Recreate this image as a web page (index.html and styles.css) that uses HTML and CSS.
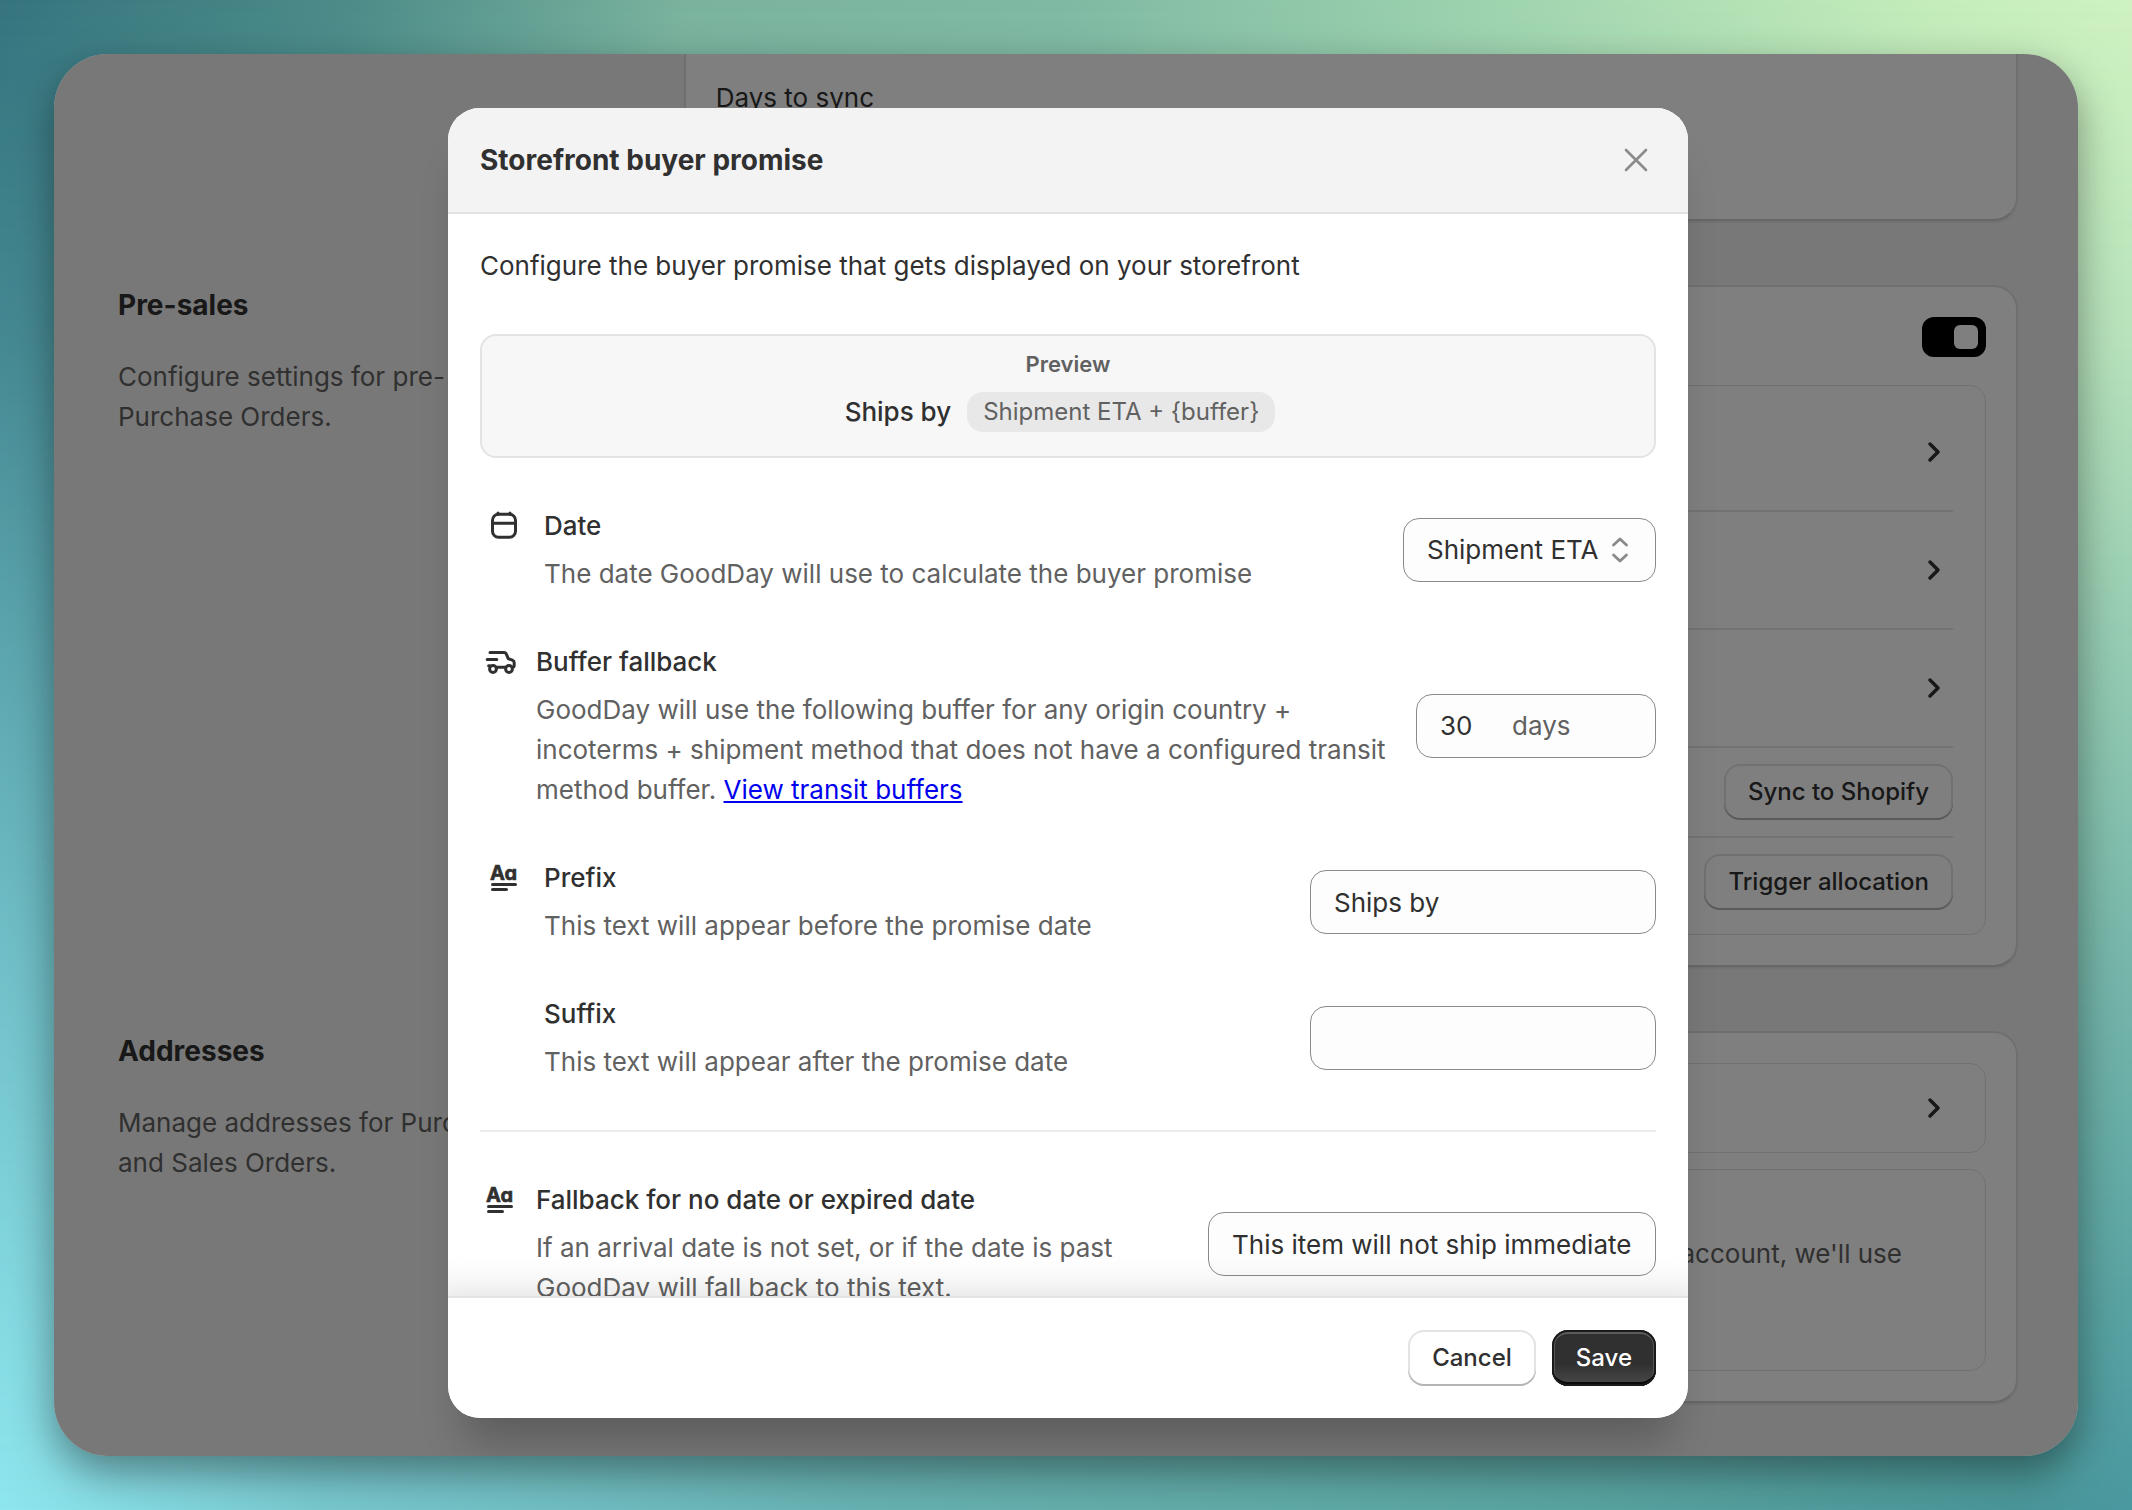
FILE: index.html
```html
<!DOCTYPE html>
<html lang="en">
  <head>
    <meta charset="UTF-8" />
    <meta name="viewport" content="width=device-width, initial-scale=1.0" />
    <title>Storefront buyer promise</title>
    <link rel="stylesheet" href="styles.css">
  </head>
  <body>
    <!-- Shared icons -->
    <svg class="sprite" aria-hidden="true">
      <symbol id="chevron" viewBox="0 0 20 20">
        <path d="M8.5 6l4 4-4 4" fill="none" stroke="currentColor" stroke-width="1.75" stroke-linecap="round" stroke-linejoin="round" />
      </symbol>
      <symbol id="text-icon" viewBox="0 0 20 20">
        <text class="icon-text" x="3" y="11">Aa</text>
        <path d="M4.25 13.25h11.5M4.25 15.75h7" fill="none" stroke="currentColor" stroke-width="1.5" stroke-linecap="round" />
      </symbol>
    </svg>

    <div class="window">
      <main class="settings">
        <section class="group">
          <div></div>
          <div class="card card-first">
            <p>Days to sync</p>
          </div>
        </section>

        <section class="group">
          <div class="group-info">
            <h2>Pre-sales</h2>
            <p>Configure settings for pre-<br />Purchase Orders.</p>
          </div>
          <div class="card">
            <div class="card-top">
              <input type="checkbox" class="switch" aria-label="Enable pre-sales" checked />
            </div>
            <div class="box box-list">
              <div class="row"><svg class="icon"><use href="#chevron" /></svg></div>
              <div class="row"><svg class="icon"><use href="#chevron" /></svg></div>
              <div class="row"><svg class="icon"><use href="#chevron" /></svg></div>
              <div class="row row-action"><button class="btn">Sync to Shopify</button></div>
              <div class="row row-action"><button class="btn">Trigger allocation</button></div>
            </div>
          </div>
        </section>

        <section class="group">
          <div class="group-info">
            <h2>Addresses</h2>
            <p>Manage addresses for Purchase Orders and Sales Orders.</p>
          </div>
          <div class="card card-stack">
            <div class="box">
              <div class="row row-action"><svg class="icon"><use href="#chevron" /></svg></div>
            </div>
            <div class="box box-note">
              <p>account, we'll use</p>
            </div>
          </div>
        </section>
      </main>

      <div class="backdrop">
        <div class="modal" role="dialog" aria-labelledby="modal-title">
          <header class="modal-header">
            <h1 id="modal-title">Storefront buyer promise</h1>
            <button class="close" aria-label="Close">
              <svg class="icon" viewBox="0 0 20 20">
                <path d="M5 5l10 10M15 5L5 15" fill="none" stroke="currentColor" stroke-width="1.3" stroke-linecap="round" />
              </svg>
            </button>
          </header>

          <div class="modal-body">
            <p>Configure the buyer promise that gets displayed on your storefront</p>

            <div class="preview">
              <h2>Preview</h2>
              <div class="preview-line">
                <strong>Ships by</strong>
                <span class="badge">Shipment ETA + {buffer}</span>
                <span></span>
              </div>
            </div>

            <div class="field">
              <div class="field-icon">
                <svg class="icon" viewBox="0 0 20 20">
                  <g fill="none" stroke="currentColor" stroke-width="1.5" stroke-linecap="round">
                    <rect x="4.25" y="4.1" width="11.5" height="11.5" rx="3" />
                    <path d="M4.25 8.6h11.5M7 3.5v.6M13 3.5v.6" />
                  </g>
                </svg>
              </div>
              <div class="field-text">
                <label for="date">Date</label>
                <p>The date GoodDay will use to calculate the buyer promise</p>
              </div>
              <div class="select">
                <select id="date">
                  <option>Shipment ETA</option>
                </select>
                <svg class="icon select-icon" viewBox="0 0 20 20">
                  <path d="M6.75 7.5L10 4.5l3.25 3M6.75 12.5l3.25 3 3.25-3" fill="none" stroke="currentColor" stroke-width="1.4" stroke-linecap="round" stroke-linejoin="round" />
                </svg>
              </div>
            </div>

            <div class="field field-long">
              <div class="field-icon">
                <svg class="icon" viewBox="0 0 20 20">
                  <g fill="none" stroke="currentColor" stroke-width="1.5" stroke-linecap="round" stroke-linejoin="round">
                    <path d="M5 5.3h6.9a1.5 1.5 0 0 1 1.4 1l.8 2 2.1.8a1.4 1.4 0 0 1 .9 1.3v1.2a1 1 0 0 1-1 1M12.7 12.6H8.3M3.6 8.7h4.8M4.3 11.9h.6" />
                    <circle cx="6.5" cy="13.5" r="1.7" />
                    <circle cx="14.5" cy="13.5" r="1.7" />
                  </g>
                </svg>
              </div>
              <div class="field-text">
                <label for="buffer">Buffer fallback</label>
                <p>GoodDay will use the following buffer for any origin country + incoterms + shipment method that does not have a configured transit method buffer. <a href="#">View transit buffers</a></p>
              </div>
              <div class="input input-days">
                <input type="text" id="buffer" value="30" />
                <span>days</span>
              </div>
            </div>

            <div class="field">
              <div class="field-icon">
                <svg class="icon"><use href="#text-icon" /></svg>
              </div>
              <div class="field-text">
                <label for="prefix">Prefix</label>
                <p>This text will appear before the promise date</p>
              </div>
              <input type="text" class="input" id="prefix" value="Ships by" />
            </div>

            <div class="field">
              <div class="field-icon"></div>
              <div class="field-text">
                <label for="suffix">Suffix</label>
                <p>This text will appear after the promise date</p>
              </div>
              <input type="text" class="input" id="suffix" />
            </div>

            <hr />

            <div class="field field-long">
              <div class="field-icon">
                <svg class="icon"><use href="#text-icon" /></svg>
              </div>
              <div class="field-text">
                <label for="fallback">Fallback for no date or expired date</label>
                <p>If an arrival date is not set, or if the date is past GoodDay will fall back to this text.</p>
              </div>
              <input type="text" class="input input-wide" id="fallback" value="This item will not ship immediate" />
            </div>
          </div>

          <footer class="modal-footer">
            <button class="btn">Cancel</button>
            <button class="btn btn-primary">Save</button>
          </footer>
        </div>
      </div>
    </div>
  </body>
</html>
```
FILE: styles.css
```css
:root {
  --text: #303030;
  --text-secondary: #616161;
  --border: #e3e3e3;
  --input-border: #8a8a8a;
  --page: #f1f1f1;
}
* {
  margin: 0;
  padding: 0;
  box-sizing: border-box;
}
body {
  height: 100vh;
  padding: 54px;
  font-family: Inter, "Liberation Sans", sans-serif;
  font-size: 26px;
  line-height: 40px;
  color: var(--text);
  background: linear-gradient(90deg, #8fe6ee, #78c8ce 15%, #68b2b3 40%, #62aca9 55%, #58a3a1 75%, #4a9699 95%, #4a99a0);
  position: relative;
  overflow: hidden;
}
/* top colours fade into the bottom ones */
body::before {
  content: "";
  position: absolute;
  inset: 0;
  background: linear-gradient(90deg, #35747e, #4b8b88 16%, #7ab29d 32%, #80b9a3 50%, #a2d6b0 72%, #c4ecba 90%, #cff2c1);
  mask-image: linear-gradient(#000, rgba(0, 0, 0, 0.83) 22%, rgba(0, 0, 0, 0.58) 42%, rgba(0, 0, 0, 0.34) 63%, rgba(0, 0, 0, 0.1) 88%, transparent);
}
button,
input,
select {
  font: inherit;
  color: inherit;
}
.sprite {
  position: absolute;
  width: 0;
  height: 0;
}
.icon {
  display: block;
  width: 40px;
  height: 40px;
  flex-shrink: 0;
}
.icon-text {
  font-size: 10px;
  font-weight: 700;
  font-feature-settings: "cv11";
  fill: currentColor;
  stroke: currentColor;
  stroke-width: 0.3px;
}

/* Settings page */
.window {
  position: relative;
  height: 100%;
  border-radius: 54px;
  overflow: hidden;
  background: var(--page);
  box-shadow: 0 16px 40px rgba(0, 0, 0, 0.4);
}
.settings {
  display: flex;
  flex-direction: column;
  gap: 64px;
  padding: 0 60px 0 64px;
}
.group {
  display: grid;
  grid-template-columns: 2fr 5fr;
  gap: 32px;
}
.group-info h2 {
  font-size: 28px;
  font-weight: 650;
  margin-bottom: 32px;
}
.group-info p {
  max-width: 500px;
  color: var(--text-secondary);
}
.card {
  padding: 30px;
  background: white;
  border: 2px solid #dfdfdf;
  border-bottom-color: #cfcfcf;
  border-radius: 24px;
  box-shadow: 0 2px 2px rgba(0, 0, 0, 0.06);
}
.card-first {
  padding: 24px 30px 101px;
  border-top: 0;
  border-radius: 0 0 24px 24px;
}
.card-top {
  display: flex;
  justify-content: flex-end;
  margin-bottom: 28px;
}
.card-stack {
  display: flex;
  flex-direction: column;
  gap: 16px;
}
.switch {
  appearance: none;
  display: flex;
  justify-content: flex-end;
  width: 64px;
  height: 40px;
  padding: 8px;
  border-radius: 12px;
  background: black;
}
.switch::before {
  content: "";
  width: 24px;
  height: 24px;
  border-radius: 6px;
  background: white;
}
.box {
  padding: 0 32px;
  border: 1px solid var(--border);
  border-radius: 16px;
}
.box-list {
  padding: 8px 32px;
}
.box-note {
  padding: 64px 83px 96px 32px;
  color: var(--text-secondary);
  text-align: right;
}
.row {
  display: flex;
  justify-content: flex-end;
  align-items: center;
  padding: 38px 0;
}
.row + .row {
  border-top: 2px solid #e5e5e5;
}
.row-action {
  padding: 16px 0;
}
.box:not(.box-list) .row-action {
  padding: 24px 0;
}

/* Buttons */
.btn {
  height: 56px;
  padding: 0 24px;
  font-size: 24px;
  font-weight: 550;
  background: white;
  border: 0;
  border-radius: 16px;
  box-shadow: inset 0 -2px 0 #b5b5b5, inset 0 0 0 2px #e3e3e3;
}
.btn-primary {
  color: white;
  background: linear-gradient(#303030 60%, #4a4a4a);
  box-shadow: inset 0 0 0 2px #1a1a1a, inset 0 -4px 0 #0a0a0a, inset 0 4px 0 #5c5c5c, inset 0 0 0 3px #555;
}

/* Modal */
.backdrop {
  position: absolute;
  inset: 0;
  display: flex;
  justify-content: center;
  padding: 54px 0 38px 4px;
  background: rgba(0, 0, 0, 0.5);
}
.modal {
  display: flex;
  flex-direction: column;
  width: 100%;
  max-width: 1240px;
  overflow: hidden;
  background: white;
  border-radius: 32px;
  box-shadow: 0 40px 40px -16px rgba(26, 26, 26, 0.28);
}
.modal-header {
  display: flex;
  justify-content: space-between;
  align-items: center;
  padding: 32px;
  background: #f3f3f3;
  border-bottom: 2px solid var(--border);
}
.modal-header h1 {
  font-size: 28px;
  font-weight: 650;
}
.close {
  border: 0;
  background: none;
  color: var(--input-border);
}
.modal-body {
  flex: 1;
  min-height: 0;
  display: flex;
  flex-direction: column;
  gap: 48px;
  padding: 32px;
  overflow: hidden;
}
.modal-body > * {
  flex-shrink: 0;
}
.preview {
  padding: 14px 14px 24px;
  background: #f7f7f7;
  border: 2px solid var(--border);
  border-radius: 16px;
}
.preview h2 {
  margin-bottom: 14px;
  font-size: 22px;
  font-weight: 600;
  line-height: 28px;
  text-align: center;
  color: var(--text-secondary);
}
.preview-line {
  display: flex;
  justify-content: center;
  gap: 16px;
}
.preview-line strong {
  font-weight: 550;
}
.badge {
  padding: 0 16px;
  font-size: 24px;
  color: var(--text-secondary);
  background: #e8e8e8;
  border-radius: 16px;
}
.field {
  display: flex;
  align-items: center;
  gap: 16px;
}
.field-icon {
  display: flex;
  justify-content: center;
  align-self: flex-start;
  width: 48px;
}
.field-long .field-icon {
  width: 40px;
}
.field-text {
  flex: 1;
}
.field-text label {
  display: block;
  margin-bottom: 8px;
  font-weight: 550;
}
.field-text p {
  color: var(--text-secondary);
}
.field-text a {
  color: #0000ee;
}
.input,
.select select {
  width: 346px;
  height: 64px;
  padding: 0 23px;
  background: #fdfdfd;
  border: 1px solid var(--input-border);
  border-radius: 16px;
}
.input-wide {
  width: 448px;
}
.input-days {
  display: flex;
  align-items: center;
  gap: 16px;
  width: 240px;
  color: var(--text-secondary);
}
.input-days input {
  width: 56px;
  border: 0;
  background: none;
  color: var(--text);
}
.select {
  position: relative;
}
.select select {
  width: 253px;
  appearance: none;
}
.select-icon {
  position: absolute;
  top: 12px;
  right: 16px;
  color: var(--input-border);
  pointer-events: none;
}
.input-wide {
  padding-right: 16px;
}
hr {
  border: 0;
  border-top: 2px solid #ebebeb;
}
.modal-footer {
  position: relative;
  display: flex;
  justify-content: flex-end;
  gap: 16px;
  padding: 32px;
  background: white;
  border-top: 2px solid var(--border);
  box-shadow: 0 20px 40px 20px rgba(0, 0, 0, 0.16);
}
```
